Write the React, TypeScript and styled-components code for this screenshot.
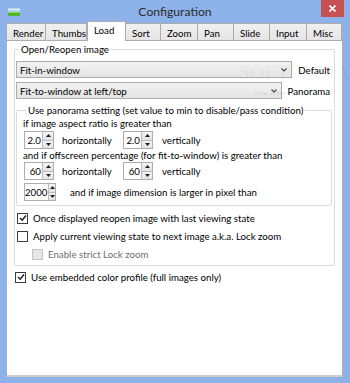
import styled, { createGlobalStyle } from 'styled-components';

const GlobalStyle = createGlobalStyle`
  html, body {
    margin: 0;
    padding: 0;
    background: #8db2e9;
  }
  body {
    font-family: "Segoe UI", Lato, "Open Sans", sans-serif;
    font-size: 9.7px;
    color: #000;
  }
`;

const Window = styled.div`
  width: 350px;
  height: 383px;
  background: #8db2e9;
  display: flex;
  flex-direction: column;
  overflow: hidden;
`;

const TitleBar = styled.div`
  height: 21px;
  display: grid;
  grid-template-columns: 1fr auto 1fr;
  align-items: start;
`;

const AppIcon = styled.div`
  padding: 8px 0 0 8px;
  line-height: 0;
`;

const Title = styled.div`
  font-size: 12.2px;
  line-height: 24px;
  color: #2b2b2b;
`;

const CloseButton = styled.div`
  justify-self: end;
  margin-right: 6px;
  width: 23px;
  height: 17px;
  background: #c75050;
  display: flex;
  align-items: center;
  justify-content: center;
`;

const Body = styled.div`
  flex: 1;
  display: flex;
  flex-direction: column;
  padding: 0 7px 6px 6px;
`;

const TabStrip = styled.div`
  display: flex;
  align-items: flex-end;
  height: 20px;
  margin-bottom: -1px;
`;

const Tab = styled.div<{ $w: number; $active?: boolean }>`
  box-sizing: border-box;
  width: ${(p) => p.$w}px;
  height: ${(p) => (p.$active ? 20 : 18)}px;
  padding: ${(p) => (p.$active ? '2px' : '3px')} 0 0 6px;
  border: 1px solid #acacac;
  border-left-width: ${(p) => (p.$active ? 1 : 0)}px;
  border-bottom: ${(p) => (p.$active ? 'none' : '1px solid #acacac')};
  background: ${(p) => (p.$active ? '#fff' : 'linear-gradient(#f0f0f0, #e5e5e5)')};
  position: relative;
  z-index: ${(p) => (p.$active ? 1 : 0)};
  line-height: 12px;
  white-space: nowrap;
  &:first-child {
    border-left-width: 1px;
  }
`;

const Panel = styled.div`
  flex: 1;
  background: #fff;
  border: 1px solid #adadad;
  border-bottom: 2px solid #cbcbcb;
  padding: 1px 7px 0 7px;
  position: relative;
`;

const Group = styled.fieldset<{ $pl: number; $pb: number }>`
  margin: 0;
  padding: 0 2px ${(p) => p.$pb}px ${(p) => p.$pl}px;
  border: 1px solid #dcdcdc;
  border-radius: 2px;
  min-width: 0;
`;

const Legend = styled.legend`
  margin-left: 3px;
  padding: 0 2px;
  line-height: 15px;
  white-space: nowrap;
`;

const ComboRow = styled.div<{ $mt: number }>`
  display: flex;
  align-items: center;
  gap: 6px;
  margin-top: ${(p) => p.$mt}px;
  padding-right: 2px;
`;

const Combo = styled.div`
  flex: 1;
  box-sizing: border-box;
  height: 17px;
  border: 1px solid #acacac;
  background: linear-gradient(#f2f2f2, #e4e4e4);
  display: flex;
  align-items: center;
  justify-content: space-between;
  padding: 0 4px 0 3px;
`;

const ComboLabel = styled.span`
  white-space: nowrap;
`;

const InnerGroup = styled(Group)`
  margin-top: 4px;
`;

const Line = styled.div<{ $mt?: number }>`
  line-height: 15px;
  margin-top: ${(p) => p.$mt ?? 0}px;
  white-space: nowrap;
`;

const SpinRow = styled.div<{ $mt?: number }>`
  display: flex;
  align-items: center;
  height: 18px;
  margin-top: ${(p) => p.$mt ?? 0}px;
  padding-left: 1px;
  white-space: nowrap;
`;

const SpinBox = styled.div<{ $w: number }>`
  box-sizing: border-box;
  width: ${(p) => p.$w}px;
  height: 18px;
  border: 1px solid #abadb3;
  display: flex;
  flex-shrink: 0;
`;

const SpinValue = styled.div`
  flex: 1;
  text-align: right;
  padding-right: 1px;
  line-height: 16px;
`;

const SpinButtons = styled.div`
  width: 10px;
  display: flex;
  flex-direction: column;
  border-left: 1px solid #bcbcbc;
`;

const SpinButton = styled.div`
  flex: 1;
  background: linear-gradient(#f3f3f3, #e2e2e2);
  display: flex;
  align-items: center;
  justify-content: center;
  & + & {
    border-top: 1px solid #bcbcbc;
  }
`;

const SpinLabel = styled.span<{ $w?: number; $ml: number }>`
  margin-left: ${(p) => p.$ml}px;
  width: ${(p) => (p.$w ? `${p.$w}px` : 'auto')};
  flex-shrink: 0;
`;

const CheckRow = styled.label<{ $indent: number; $mt?: number; $disabled?: boolean }>`
  display: flex;
  align-items: center;
  gap: 5px;
  height: 18px;
  padding-left: ${(p) => p.$indent}px;
  margin-top: ${(p) => p.$mt ?? 0}px;
  color: ${(p) => (p.$disabled ? '#6d6d6d' : '#000')};
  white-space: nowrap;
`;

const Box = styled.span<{ $disabled?: boolean }>`
  box-sizing: border-box;
  width: 11px;
  height: 11px;
  border: 1px solid ${(p) => (p.$disabled ? '#c4c4c4' : '#3c3c3c')};
  background: ${(p) => (p.$disabled ? '#e6e6e6' : '#fff')};
  display: flex;
  align-items: center;
  justify-content: center;
  flex-shrink: 0;
`;

const Watermark = styled.div`
  position: absolute;
  left: 232px;
  top: 21px;
  font-family: "Liberation Serif", serif;
  font-size: 19px;
  letter-spacing: 1px;
  color: rgba(0, 0, 0, 0.05);
  pointer-events: none;
`;

const WatermarkUrl = styled.div`
  position: absolute;
  left: 247px;
  top: 48px;
  font-size: 6px;
  color: rgba(0, 0, 0, 0.12);
  pointer-events: none;
`;

const Chevron = () => (
  <svg width="6" height="4" viewBox="0 0 6 4">
    <path d="M0.5 0.5 L3 3 L5.5 0.5" fill="none" stroke="#444" strokeWidth="1.1" />
  </svg>
);

const Tri = ({ up }: { up?: boolean }) => (
  <svg width="5" height="3" viewBox="0 0 5 3">
    <path d={up ? 'M0 3 L2.5 0 L5 3Z' : 'M0 0 L5 0 L2.5 3Z'} fill="#1e1e1e" />
  </svg>
);

const Check = () => (
  <svg width="8" height="8" viewBox="0 0 8 8">
    <path d="M1 4 L3.2 6.2 L7 1.5" fill="none" stroke="#222" strokeWidth="1.5" />
  </svg>
);

const Spinner = ({ value, w = 30 }: { value: string; w?: number }) => (
  <SpinBox $w={w}>
    <SpinValue>{value}</SpinValue>
    <SpinButtons>
      <SpinButton>
        <Tri up />
      </SpinButton>
      <SpinButton>
        <Tri />
      </SpinButton>
    </SpinButtons>
  </SpinBox>
);

const CheckOption = ({
  label,
  checked,
  disabled,
  indent,
  mt,
}: {
  label: string;
  checked?: boolean;
  disabled?: boolean;
  indent: number;
  mt?: number;
}) => (
  <CheckRow $indent={indent} $mt={mt} $disabled={disabled}>
    <Box $disabled={disabled}>{checked && <Check />}</Box>
    {label}
  </CheckRow>
);

const tabs = [
  { name: 'Render', w: 40 },
  { name: 'Thumbs', w: 41 },
  { name: 'Load', w: 39 },
  { name: 'Sort', w: 35 },
  { name: 'Zoom', w: 37 },
  { name: 'Pan', w: 36 },
  { name: 'Slide', w: 36 },
  { name: 'Input', w: 37 },
  { name: 'Misc', w: 35 },
];

const App = () => {
  return (
    <>
      <GlobalStyle />
      <Window>
        <TitleBar>
          <AppIcon>
            <svg width="12" height="8" viewBox="0 0 12 8">
              <rect width="12" height="4" fill="#a9d6f5" />
              <rect y="1" width="12" height="1" fill="#e4f3fb" />
              <rect y="4" width="12" height="4" fill="#4fb52a" />
              <rect y="4" width="12" height="1" fill="#8fd14f" />
            </svg>
          </AppIcon>
          <Title>Configuration</Title>
          <CloseButton>
            <svg width="7" height="7" viewBox="0 0 7 7">
              <path d="M0.5 0.5 L6.5 6.5 M6.5 0.5 L0.5 6.5" stroke="#fff" strokeWidth="1.6" />
            </svg>
          </CloseButton>
        </TitleBar>
        <Body>
          <TabStrip>
            {tabs.map((t) => (
              <Tab key={t.name} $w={t.w} $active={t.name === 'Load'}>
                {t.name}
              </Tab>
            ))}
          </TabStrip>
          <Panel>
            <Group $pl={1} $pb={2}>
              <Legend>Open/Reopen image</Legend>
              <ComboRow $mt={4}>
                <Combo>
                  Fit-in-window
                  <Chevron />
                </Combo>
                <ComboLabel>Default</ComboLabel>
              </ComboRow>
              <ComboRow $mt={4}>
                <Combo>
                  Fit-to-window at left/top
                  <Chevron />
                </Combo>
                <ComboLabel>Panorama</ComboLabel>
              </ComboRow>
              <InnerGroup $pl={6} $pb={4}>
                <Legend>Use panorama setting (set value to min to disable/pass condition)</Legend>
                <Line $mt={-2}>if image aspect ratio is greater than</Line>
                <SpinRow>
                  <Spinner value="2.0" />
                  <SpinLabel $ml={8} $w={61}>horizontally</SpinLabel>
                  <Spinner value="2.0" />
                  <SpinLabel $ml={9}>vertically</SpinLabel>
                </SpinRow>
                <Line $mt={-1}>and if offscreen percentage (for fit-to-window) is greater than</Line>
                <SpinRow $mt={-1}>
                  <Spinner value="60" />
                  <SpinLabel $ml={8} $w={61}>horizontally</SpinLabel>
                  <Spinner value="60" />
                  <SpinLabel $ml={9}>vertically</SpinLabel>
                </SpinRow>
                <SpinRow $mt={3}>
                  <Spinner value="2000" w={32} />
                  <SpinLabel $ml={14}>and if image dimension is larger in pixel than</SpinLabel>
                </SpinRow>
              </InnerGroup>
              <CheckOption indent={1} mt={3} checked label="Once displayed reopen image with last viewing state" />
              <CheckOption indent={1} label="Apply current viewing state to next image a.k.a. Lock zoom" />
              <CheckOption indent={16} disabled label="Enable strict Lock zoom" />
            </Group>
            <CheckOption indent={1} mt={2} checked label="Use embedded color profile (full images only)" />
            <Watermark>SOFTPEDIA</Watermark>
            <WatermarkUrl>www.softpedia.com</WatermarkUrl>
          </Panel>
        </Body>
      </Window>
    </>
  );
};

export default App;
